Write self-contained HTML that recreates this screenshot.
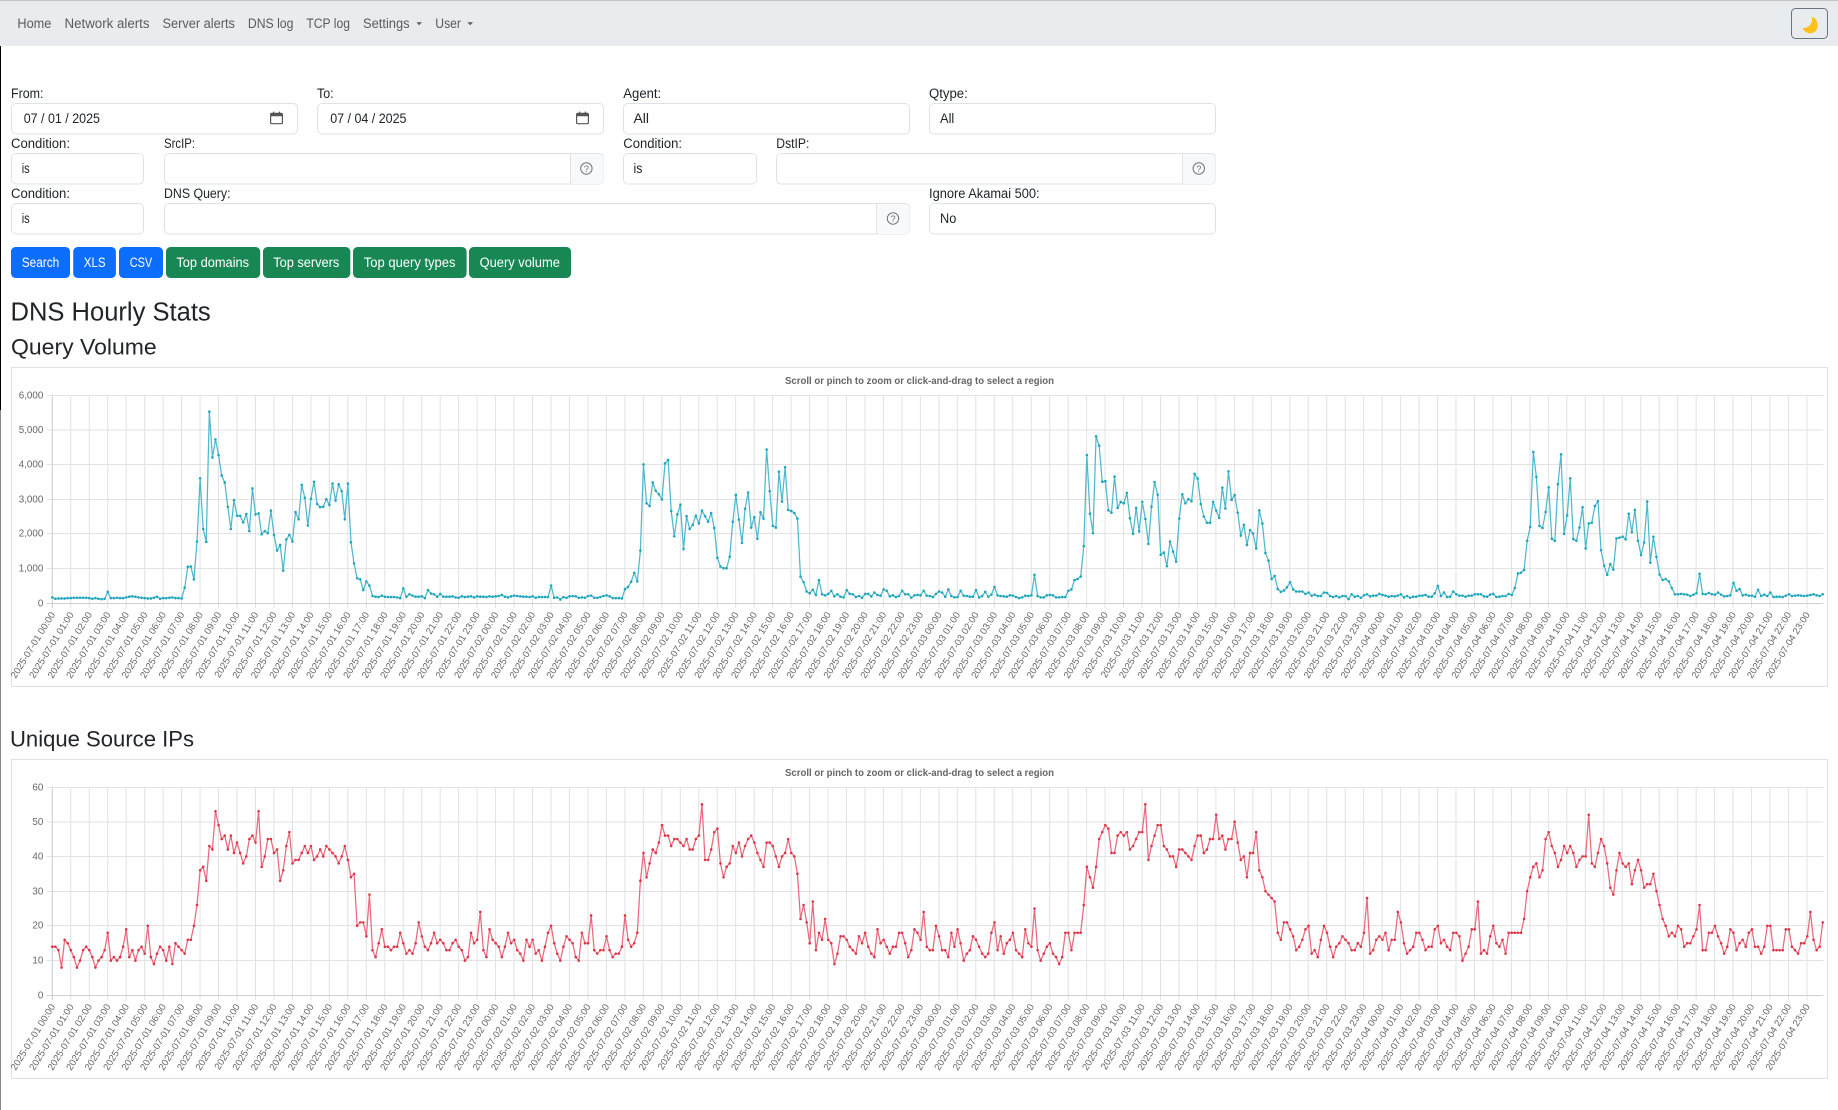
<!DOCTYPE html>
<html lang="en">
<head>
<meta charset="utf-8">
<title>DNS Hourly Stats</title>
<style>
html,body{margin:0;padding:0;background:#fff;width:1838px;height:1110px;overflow:hidden}
svg{display:block;font-family:"Liberation Sans",Arial,sans-serif}
.nav{font-size:13.4px;fill:#595c5f}
.lbl{font-size:13.4px;fill:#212529}
.val{font-size:13.4px;fill:#212529}
.btn{font-size:13.4px;fill:#fff}
.box{fill:#fff;stroke:#dee2e6;stroke-width:1}
.add{fill:#f8f9fa}
.q{font-size:9.5px;fill:#6c757d;text-anchor:middle}
.qc{fill:none;stroke:#6c757d;stroke-width:1}
.h{fill:#212529}
.soft{filter:blur(.3px)}
.ct{font-size:10px;font-weight:bold;fill:#666;text-anchor:middle}
.yl{font-size:9.8px;fill:#666;text-anchor:end}
.xl text{font-size:9.6px;fill:#666;text-anchor:end}
.grid{stroke:#e2e2e2;stroke-width:1;fill:none}
.axis{stroke:#d0d0d0;stroke-width:1;fill:none}
.frame{fill:#fff;stroke:#e0e1e6;stroke-width:1}
.l1{fill:none;stroke:#4fb9cc;stroke-width:1.25;vector-effect:non-scaling-stroke;stroke-linejoin:round;marker:url(#m1)}
.l2{fill:none;stroke:#e9697d;stroke-width:1.25;vector-effect:non-scaling-stroke;stroke-linejoin:round;marker:url(#m2)}
</style>
</head>
<body>
<svg xmlns="http://www.w3.org/2000/svg" width="1838" height="1110" viewBox="0 0 1838 1110">
<defs>
<marker id="m1" markerUnits="userSpaceOnUse" markerWidth="1" markerHeight="1" refX="0" refY="0" overflow="visible"><ellipse cx="0" cy="0" rx=".42" ry="3.74" fill="#1fa6bc"/></marker>
<marker id="m2" markerUnits="userSpaceOnUse" markerWidth="1" markerHeight="1" refX="0" refY="0" overflow="visible"><ellipse cx="0" cy="0" rx=".42" ry=".374" fill="#dc3545"/></marker>
</defs>

<!-- left strip and navbar -->
<rect x="0" y="0" width="1838" height="46" fill="#e9ecef"/>
<rect x="0" y="0" width="1838" height="1" fill="#c6c6c6"/>
<rect x="0" y="46" width="1" height="364" fill="#000"/>
<rect x="0" y="410" width="1" height="700" fill="#888"/>
<text class="nav" x="17.4" y="28" textLength="34" lengthAdjust="spacingAndGlyphs">Home</text>
<text class="nav" x="64.5" y="28" textLength="85" lengthAdjust="spacingAndGlyphs">Network alerts</text>
<text class="nav" x="162.5" y="28" textLength="72.4" lengthAdjust="spacingAndGlyphs">Server alerts</text>
<text class="nav" x="247.9" y="28" textLength="45.5" lengthAdjust="spacingAndGlyphs">DNS log</text>
<text class="nav" x="306.4" y="28" textLength="43.6" lengthAdjust="spacingAndGlyphs">TCP log</text>
<text class="nav" x="363" y="28" textLength="46.6" lengthAdjust="spacingAndGlyphs">Settings</text>
<path d="M416.4 22.3h5.6l-2.8 3z" fill="#595c5f"/>
<text class="nav" x="435.3" y="28" textLength="25.7" lengthAdjust="spacingAndGlyphs">User</text>
<path d="M467.4 22.3h5.6l-2.8 3z" fill="#595c5f"/>
<rect x="1791.5" y="8.5" width="36" height="30" rx="4" fill="none" stroke="#6c757d"/>
<path d="M1811.7 16.7A7.2 7.2 0 0 1 1817.3 23.5A7.2 7.2 0 0 1 1802.7 28A8.7 8.7 0 0 0 1811.7 16.7z" fill="#fcc21b"/>

<!-- row 1 -->
<text class="lbl" x="11" y="98" textLength="32.5" lengthAdjust="spacingAndGlyphs">From:</text>
<rect class="box" x="11.5" y="103.5" width="286" height="30.5" rx="4.5"/>
<text class="val" x="23.7" y="123" textLength="76.3" lengthAdjust="spacingAndGlyphs">07 / 01 / 2025</text>
<g fill="none" stroke="#555" stroke-width="1.2"><rect x="270.6" y="113.3" width="11.8" height="10.4" rx="1.2"/></g>
<path d="M270.6 113.3h11.8v3h-11.8zM273 111.6h1.2v2h-1.2zM278.8 111.6h1.2v2h-1.2z" fill="#555"/>

<text class="lbl" x="317" y="98" textLength="16.6" lengthAdjust="spacingAndGlyphs">To:</text>
<rect class="box" x="317.5" y="103.5" width="286" height="30.5" rx="4.5"/>
<text class="val" x="330.2" y="123" textLength="76.3" lengthAdjust="spacingAndGlyphs">07 / 04 / 2025</text>
<g fill="none" stroke="#555" stroke-width="1.2"><rect x="576.6" y="113.3" width="11.8" height="10.4" rx="1.2"/></g>
<path d="M576.6 113.3h11.8v3h-11.8zM579 111.6h1.2v2h-1.2zM584.8 111.6h1.2v2h-1.2z" fill="#555"/>

<text class="lbl" x="623.3" y="98" textLength="37.9" lengthAdjust="spacingAndGlyphs">Agent:</text>
<rect class="box" x="623.5" y="103.5" width="286" height="30.5" rx="4.5"/>
<text class="val" x="633.5" y="123" textLength="15.5" lengthAdjust="spacingAndGlyphs">All</text>

<text class="lbl" x="929" y="98" textLength="38.8" lengthAdjust="spacingAndGlyphs">Qtype:</text>
<rect class="box" x="929.5" y="103.5" width="286" height="30.5" rx="4.5"/>
<text class="val" x="940" y="123" textLength="14.3" lengthAdjust="spacingAndGlyphs">All</text>

<!-- row 2 -->
<text class="lbl" x="11" y="148" textLength="59" lengthAdjust="spacingAndGlyphs">Condition:</text>
<rect class="box" x="11.5" y="153.5" width="132" height="30.5" rx="4.5"/>
<text class="val" x="21.7" y="173" textLength="8" lengthAdjust="spacingAndGlyphs">is</text>

<text class="lbl" x="164" y="148" textLength="31" lengthAdjust="spacingAndGlyphs">SrcIP:</text>
<rect class="box" x="164.5" y="153.5" width="439" height="30.5" rx="4.5"/>
<path class="add" d="M570.6 154h28.5a4.5 4.5 0 0 1 4.5 4.5v21a4.5 4.5 0 0 1-4.5 4.5h-28.5z"/>
<path d="M570.5 153.5V184" stroke="#dee2e6" fill="none"/>
<circle class="qc" cx="586.4" cy="168.5" r="5.7"/>
<text class="q" x="586.4" y="172">?</text>

<text class="lbl" x="623.3" y="148" textLength="58.7" lengthAdjust="spacingAndGlyphs">Condition:</text>
<rect class="box" x="623.5" y="153.5" width="133" height="30.5" rx="4.5"/>
<text class="val" x="633.5" y="173" textLength="8.9" lengthAdjust="spacingAndGlyphs">is</text>

<text class="lbl" x="776.3" y="148" textLength="33.1" lengthAdjust="spacingAndGlyphs">DstIP:</text>
<rect class="box" x="776.5" y="153.5" width="439" height="30.5" rx="4.5"/>
<path class="add" d="M1182.4 154h28.6a4.5 4.5 0 0 1 4.5 4.5v21a4.5 4.5 0 0 1-4.5 4.5h-28.6z"/>
<path d="M1182.5 153.5V184" stroke="#dee2e6" fill="none"/>
<circle class="qc" cx="1198.8" cy="168.5" r="5.7"/>
<text class="q" x="1198.8" y="172">?</text>

<!-- row 3 -->
<text class="lbl" x="11" y="198" textLength="59" lengthAdjust="spacingAndGlyphs">Condition:</text>
<rect class="box" x="11.5" y="203.5" width="132" height="30.5" rx="4.5"/>
<text class="val" x="21.7" y="223" textLength="8" lengthAdjust="spacingAndGlyphs">is</text>

<text class="lbl" x="164" y="198" textLength="66.5" lengthAdjust="spacingAndGlyphs">DNS Query:</text>
<rect class="box" x="164.5" y="203.5" width="745" height="30.5" rx="4.5"/>
<path class="add" d="M876.3 204h28.7a4.5 4.5 0 0 1 4.5 4.5v21a4.5 4.5 0 0 1-4.5 4.5h-28.7z"/>
<path d="M876.5 203.5V234" stroke="#dee2e6" fill="none"/>
<circle class="qc" cx="893" cy="218.5" r="5.7"/>
<text class="q" x="893" y="222">?</text>

<text class="lbl" x="929" y="198" textLength="110.6" lengthAdjust="spacingAndGlyphs">Ignore Akamai 500:</text>
<rect class="box" x="929.5" y="203.5" width="286" height="30.5" rx="4.5"/>
<text class="val" x="940" y="223" textLength="16.3" lengthAdjust="spacingAndGlyphs">No</text>

<!-- buttons -->
<rect x="11" y="247" width="59" height="31" rx="4.5" fill="#0d6efd"/>
<text class="btn" x="21.7" y="267" textLength="37.6" lengthAdjust="spacingAndGlyphs">Search</text>
<rect x="73.2" y="247" width="42.7" height="31" rx="4.5" fill="#0d6efd"/>
<text class="btn" x="83.8" y="267" textLength="21.8" lengthAdjust="spacingAndGlyphs">XLS</text>
<rect x="119" y="247" width="44" height="31" rx="4.5" fill="#0d6efd"/>
<text class="btn" x="129.7" y="267" textLength="22.5" lengthAdjust="spacingAndGlyphs">CSV</text>
<rect x="166" y="247" width="94.2" height="31" rx="4.5" fill="#198754"/>
<text class="btn" x="176.4" y="267" textLength="72.7" lengthAdjust="spacingAndGlyphs">Top domains</text>
<rect x="263" y="247" width="87.3" height="31" rx="4.5" fill="#198754"/>
<text class="btn" x="273.2" y="267" textLength="66.1" lengthAdjust="spacingAndGlyphs">Top servers</text>
<rect x="353" y="247" width="113.6" height="31" rx="4.5" fill="#198754"/>
<text class="btn" x="363.8" y="267" textLength="91.7" lengthAdjust="spacingAndGlyphs">Top query types</text>
<rect x="469" y="247" width="102" height="31" rx="4.5" fill="#198754"/>
<text class="btn" x="479.6" y="267" textLength="80.3" lengthAdjust="spacingAndGlyphs">Query volume</text>

<!-- headings -->
<text class="h" x="10.5" y="320.7" font-size="25.5" textLength="200.2" lengthAdjust="spacingAndGlyphs">DNS Hourly Stats</text>
<text class="h" x="11" y="354.3" font-size="22" textLength="145.7" lengthAdjust="spacingAndGlyphs">Query Volume</text>
<text class="h" x="10" y="746.7" font-size="22" textLength="184" lengthAdjust="spacingAndGlyphs">Unique Source IPs</text>

<!-- chart 1 -->
<rect class="frame" x="11.5" y="367.5" width="1816" height="319"/>
<g class="soft">
<text class="ct" x="919.5" y="384" textLength="269" lengthAdjust="spacingAndGlyphs">Scroll or pinch to zoom or click-and-drag to select a region</text>
<line x1="51.8" x2="1808" y1="501.5" y2="501.5" stroke="#e2e2e2" stroke-width="213" stroke-dasharray="1 17.47"/>
<path class="grid" d="M47 395.5H1823.3M47 430H1823.3M47 464.5H1823.3M47 499.5H1823.3M47 533.5H1823.3M47 568.5H1823.3"/>
<path class="axis" d="M47 603.5H1823.3M52.3 395V608"/>
<text class="yl" x="43.3" y="398.5">6,000</text>
<text class="yl" x="43.3" y="433">5,000</text>
<text class="yl" x="43.3" y="467.5">4,000</text>
<text class="yl" x="43.3" y="502.5">3,000</text>
<text class="yl" x="43.3" y="536.5">2,000</text>
<text class="yl" x="43.3" y="571.5">1,000</text>
<text class="yl" x="43.3" y="606.5">0</text>
<g transform="translate(52.3 603.3) scale(3.079 -.3472)">
<polyline class="l1" points="0,17 1,13 2,14 3,14 4,14 5,15 6,15 7,16 8,16 9,16 10,16 11,16 12,15 13,13 14,15 15,13 16,12 17,13 18,33 19,15 20,15 21,16 22,15 23,15 24,17 25,19 26,20 27,19 28,17 29,16 30,15 31,14 32,14 33,16 34,19 35,13 36,15 37,15 38,16 39,17 40,15 41,15 42,14 43,45 44,105 45,106 46,69 47,178 48,360 49,214 50,177 51,552 52,420 53,472 54,427 55,368 56,348 57,278 58,214 59,297 60,252 61,252 62,233 63,257 64,208 65,331 66,256 67,259 68,199 69,208 70,202 71,267 72,197 73,152 74,168 75,94 76,184 77,197 78,178 79,263 80,242 81,341 82,304 83,224 84,301 85,350 86,286 87,277 88,278 89,300 90,283 91,345 92,296 93,343 94,323 95,242 96,345 97,176 98,115 99,72 100,69 101,38 102,63 103,51 104,21 105,19 106,18 107,22 108,19 109,18 110,18 111,18 112,17 113,15 114,43 115,19 116,26 117,22 118,19 119,19 120,20 121,15 122,38 123,28 124,26 125,19 126,27 127,19 128,19 129,19 130,20 131,17 132,16 133,20 134,18 135,19 136,20 137,17 138,20 139,19 140,19 141,18 142,20 143,19 144,20 145,21 146,24 147,19 148,17 149,20 150,22 151,21 152,20 153,19 154,19 155,18 156,20 157,16 158,18 159,18 160,18 161,18 162,51 163,16 164,17 165,11 166,18 167,16 168,20 169,21 170,20 171,16 172,17 173,16 174,21 175,22 176,16 177,16 178,18 179,21 180,23 181,20 182,15 183,15 184,15 185,14 186,41 187,47 188,62 189,88 190,63 191,152 192,400 193,288 194,280 195,348 196,324 197,314 198,299 199,403 200,413 201,266 202,193 203,256 204,284 205,156 206,251 207,214 208,226 209,252 210,230 211,267 212,251 213,235 214,260 215,217 216,131 217,106 218,101 219,101 220,134 221,235 222,312 223,241 224,174 225,272 226,319 227,218 228,248 229,186 230,262 231,244 232,443 233,323 234,223 235,218 236,379 237,293 238,392 239,269 240,266 241,260 242,244 243,77 244,61 245,34 246,29 247,39 248,24 249,67 250,26 251,23 252,27 253,36 254,20 255,26 256,19 257,17 258,38 259,27 260,26 261,18 262,21 263,16 264,27 265,27 266,20 267,31 268,24 269,22 270,40 271,36 272,20 273,23 274,18 275,21 276,36 277,26 278,26 279,16 280,23 281,24 282,23 283,36 284,22 285,21 286,18 287,27 288,34 289,31 290,19 291,40 292,21 293,17 294,18 295,36 296,22 297,21 298,19 299,19 300,38 301,17 302,21 303,33 304,19 305,25 306,47 307,23 308,21 309,20 310,19 311,23 312,22 313,18 314,15 315,17 316,22 317,21 318,23 319,82 320,21 321,17 322,17 323,23 324,24 325,23 326,17 327,17 328,18 329,18 330,36 331,40 332,67 333,70 334,77 335,165 336,427 337,258 338,202 339,481 340,454 341,350 342,352 343,268 344,261 345,365 346,275 347,292 348,288 349,318 350,245 351,200 352,275 353,207 354,292 355,243 356,171 357,278 358,349 359,313 360,140 361,146 362,107 363,178 364,149 365,120 366,244 367,314 368,288 369,300 370,294 371,373 372,359 373,286 374,250 375,232 376,232 377,292 378,267 379,246 380,333 381,273 382,380 383,298 384,312 385,261 386,195 387,226 388,168 389,211 390,201 391,158 392,268 393,230 394,145 395,123 396,70 397,79 398,41 399,33 400,37 401,46 402,61 403,40 404,34 405,34 406,34 407,27 408,31 409,22 410,25 411,21 412,21 413,31 414,30 415,21 416,18 417,21 418,17 419,21 420,21 421,12 422,26 423,19 424,21 425,16 426,23 427,26 428,20 429,22 430,22 431,27 432,24 433,22 434,19 435,21 436,20 437,22 438,26 439,17 440,21 441,16 442,19 443,19 444,22 445,22 446,24 447,19 448,19 449,29 450,50 451,21 452,31 453,18 454,19 455,34 456,26 457,22 458,22 459,19 460,22 461,22 462,26 463,26 464,26 465,20 466,19 467,25 468,27 469,18 470,19 471,21 472,21 473,27 474,24 475,44 476,86 477,88 478,96 479,180 480,220 481,436 482,364 483,223 484,217 485,263 486,334 487,186 488,180 489,343 490,429 491,200 492,253 493,360 494,185 495,180 496,218 497,277 498,158 499,230 500,232 501,280 502,294 503,153 504,108 505,82 506,113 507,97 508,187 509,189 510,192 511,184 512,258 513,205 514,269 515,180 516,139 517,175 518,293 519,117 520,192 521,134 522,83 523,67 524,70 525,63 526,44 527,26 528,26 529,27 530,26 531,25 532,21 533,25 534,29 535,85 536,27 537,26 538,30 539,26 540,25 541,31 542,25 543,20 544,21 545,23 546,59 547,36 548,41 549,23 550,25 551,22 552,22 553,19 554,39 555,21 556,25 557,21 558,31 559,18 560,19 561,19 562,18 563,22 564,26 565,21 566,22 567,23 568,22 569,21 570,22 571,24 572,26 573,23 574,21 575,26"/>
</g>
<g class="xl" transform="translate(2.2 614.5)">
<text transform="translate(53.3)rotate(-58.4)">2025-07-01 00:00</text>
<text transform="translate(71.8)rotate(-58.4)">2025-07-01 01:00</text>
<text transform="translate(90.2)rotate(-58.4)">2025-07-01 02:00</text>
<text transform="translate(108.7)rotate(-58.4)">2025-07-01 03:00</text>
<text transform="translate(127.2)rotate(-58.4)">2025-07-01 04:00</text>
<text transform="translate(145.7)rotate(-58.4)">2025-07-01 05:00</text>
<text transform="translate(164.1)rotate(-58.4)">2025-07-01 06:00</text>
<text transform="translate(182.6)rotate(-58.4)">2025-07-01 07:00</text>
<text transform="translate(201.1)rotate(-58.4)">2025-07-01 08:00</text>
<text transform="translate(219.5)rotate(-58.4)">2025-07-01 09:00</text>
<text transform="translate(238)rotate(-58.4)">2025-07-01 10:00</text>
<text transform="translate(256.5)rotate(-58.4)">2025-07-01 11:00</text>
<text transform="translate(274.9)rotate(-58.4)">2025-07-01 12:00</text>
<text transform="translate(293.4)rotate(-58.4)">2025-07-01 13:00</text>
<text transform="translate(311.9)rotate(-58.4)">2025-07-01 14:00</text>
<text transform="translate(330.4)rotate(-58.4)">2025-07-01 15:00</text>
<text transform="translate(348.8)rotate(-58.4)">2025-07-01 16:00</text>
<text transform="translate(367.3)rotate(-58.4)">2025-07-01 17:00</text>
<text transform="translate(385.8)rotate(-58.4)">2025-07-01 18:00</text>
<text transform="translate(404.2)rotate(-58.4)">2025-07-01 19:00</text>
<text transform="translate(422.7)rotate(-58.4)">2025-07-01 20:00</text>
<text transform="translate(441.2)rotate(-58.4)">2025-07-01 21:00</text>
<text transform="translate(459.6)rotate(-58.4)">2025-07-01 22:00</text>
<text transform="translate(478.1)rotate(-58.4)">2025-07-01 23:00</text>
<text transform="translate(496.6)rotate(-58.4)">2025-07-02 00:00</text>
<text transform="translate(515.1)rotate(-58.4)">2025-07-02 01:00</text>
<text transform="translate(533.5)rotate(-58.4)">2025-07-02 02:00</text>
<text transform="translate(552)rotate(-58.4)">2025-07-02 03:00</text>
<text transform="translate(570.5)rotate(-58.4)">2025-07-02 04:00</text>
<text transform="translate(588.9)rotate(-58.4)">2025-07-02 05:00</text>
<text transform="translate(607.4)rotate(-58.4)">2025-07-02 06:00</text>
<text transform="translate(625.9)rotate(-58.4)">2025-07-02 07:00</text>
<text transform="translate(644.3)rotate(-58.4)">2025-07-02 08:00</text>
<text transform="translate(662.8)rotate(-58.4)">2025-07-02 09:00</text>
<text transform="translate(681.3)rotate(-58.4)">2025-07-02 10:00</text>
<text transform="translate(699.8)rotate(-58.4)">2025-07-02 11:00</text>
<text transform="translate(718.2)rotate(-58.4)">2025-07-02 12:00</text>
<text transform="translate(736.7)rotate(-58.4)">2025-07-02 13:00</text>
<text transform="translate(755.2)rotate(-58.4)">2025-07-02 14:00</text>
<text transform="translate(773.6)rotate(-58.4)">2025-07-02 15:00</text>
<text transform="translate(792.1)rotate(-58.4)">2025-07-02 16:00</text>
<text transform="translate(810.6)rotate(-58.4)">2025-07-02 17:00</text>
<text transform="translate(829)rotate(-58.4)">2025-07-02 18:00</text>
<text transform="translate(847.5)rotate(-58.4)">2025-07-02 19:00</text>
<text transform="translate(866)rotate(-58.4)">2025-07-02 20:00</text>
<text transform="translate(884.5)rotate(-58.4)">2025-07-02 21:00</text>
<text transform="translate(902.9)rotate(-58.4)">2025-07-02 22:00</text>
<text transform="translate(921.4)rotate(-58.4)">2025-07-02 23:00</text>
<text transform="translate(939.9)rotate(-58.4)">2025-07-03 00:00</text>
<text transform="translate(958.3)rotate(-58.4)">2025-07-03 01:00</text>
<text transform="translate(976.8)rotate(-58.4)">2025-07-03 02:00</text>
<text transform="translate(995.3)rotate(-58.4)">2025-07-03 03:00</text>
<text transform="translate(1013.7)rotate(-58.4)">2025-07-03 04:00</text>
<text transform="translate(1032.2)rotate(-58.4)">2025-07-03 05:00</text>
<text transform="translate(1050.7)rotate(-58.4)">2025-07-03 06:00</text>
<text transform="translate(1069.2)rotate(-58.4)">2025-07-03 07:00</text>
<text transform="translate(1087.6)rotate(-58.4)">2025-07-03 08:00</text>
<text transform="translate(1106.1)rotate(-58.4)">2025-07-03 09:00</text>
<text transform="translate(1124.6)rotate(-58.4)">2025-07-03 10:00</text>
<text transform="translate(1143)rotate(-58.4)">2025-07-03 11:00</text>
<text transform="translate(1161.5)rotate(-58.4)">2025-07-03 12:00</text>
<text transform="translate(1180)rotate(-58.4)">2025-07-03 13:00</text>
<text transform="translate(1198.4)rotate(-58.4)">2025-07-03 14:00</text>
<text transform="translate(1216.9)rotate(-58.4)">2025-07-03 15:00</text>
<text transform="translate(1235.4)rotate(-58.4)">2025-07-03 16:00</text>
<text transform="translate(1253.9)rotate(-58.4)">2025-07-03 17:00</text>
<text transform="translate(1272.3)rotate(-58.4)">2025-07-03 18:00</text>
<text transform="translate(1290.8)rotate(-58.4)">2025-07-03 19:00</text>
<text transform="translate(1309.3)rotate(-58.4)">2025-07-03 20:00</text>
<text transform="translate(1327.7)rotate(-58.4)">2025-07-03 21:00</text>
<text transform="translate(1346.2)rotate(-58.4)">2025-07-03 22:00</text>
<text transform="translate(1364.7)rotate(-58.4)">2025-07-03 23:00</text>
<text transform="translate(1383.1)rotate(-58.4)">2025-07-04 00:00</text>
<text transform="translate(1401.6)rotate(-58.4)">2025-07-04 01:00</text>
<text transform="translate(1420.1)rotate(-58.4)">2025-07-04 02:00</text>
<text transform="translate(1438.6)rotate(-58.4)">2025-07-04 03:00</text>
<text transform="translate(1457)rotate(-58.4)">2025-07-04 04:00</text>
<text transform="translate(1475.5)rotate(-58.4)">2025-07-04 05:00</text>
<text transform="translate(1494)rotate(-58.4)">2025-07-04 06:00</text>
<text transform="translate(1512.4)rotate(-58.4)">2025-07-04 07:00</text>
<text transform="translate(1530.9)rotate(-58.4)">2025-07-04 08:00</text>
<text transform="translate(1549.4)rotate(-58.4)">2025-07-04 09:00</text>
<text transform="translate(1567.8)rotate(-58.4)">2025-07-04 10:00</text>
<text transform="translate(1586.3)rotate(-58.4)">2025-07-04 11:00</text>
<text transform="translate(1604.8)rotate(-58.4)">2025-07-04 12:00</text>
<text transform="translate(1623.3)rotate(-58.4)">2025-07-04 13:00</text>
<text transform="translate(1641.7)rotate(-58.4)">2025-07-04 14:00</text>
<text transform="translate(1660.2)rotate(-58.4)">2025-07-04 15:00</text>
<text transform="translate(1678.7)rotate(-58.4)">2025-07-04 16:00</text>
<text transform="translate(1697.1)rotate(-58.4)">2025-07-04 17:00</text>
<text transform="translate(1715.6)rotate(-58.4)">2025-07-04 18:00</text>
<text transform="translate(1734.1)rotate(-58.4)">2025-07-04 19:00</text>
<text transform="translate(1752.5)rotate(-58.4)">2025-07-04 20:00</text>
<text transform="translate(1771)rotate(-58.4)">2025-07-04 21:00</text>
<text transform="translate(1789.5)rotate(-58.4)">2025-07-04 22:00</text>
<text transform="translate(1808)rotate(-58.4)">2025-07-04 23:00</text>
</g>
</g>

<!-- chart 2 -->
<rect class="frame" x="11.5" y="759.5" width="1816" height="319"/>
<g class="soft">
<text class="ct" x="919.5" y="776" textLength="269" lengthAdjust="spacingAndGlyphs">Scroll or pinch to zoom or click-and-drag to select a region</text>
<line x1="51.8" x2="1808" y1="893.5" y2="893.5" stroke="#e2e2e2" stroke-width="213" stroke-dasharray="1 17.47"/>
<path class="grid" d="M47 787.5H1823.3M47 822H1823.3M47 856.5H1823.3M47 891.5H1823.3M47 925.5H1823.3M47 960.5H1823.3"/>
<path class="axis" d="M47 995.5H1823.3M52.3 787V1000"/>
<text class="yl" x="43.3" y="790.5">60</text>
<text class="yl" x="43.3" y="825">50</text>
<text class="yl" x="43.3" y="859.5">40</text>
<text class="yl" x="43.3" y="894.5">30</text>
<text class="yl" x="43.3" y="928.5">20</text>
<text class="yl" x="43.3" y="963.5">10</text>
<text class="yl" x="43.3" y="998.5">0</text>
<g transform="translate(52.3 995.3) scale(3.079 -3.472)">
<polyline class="l2" points="0,14 1,14 2,13 3,8 4,16 5,15 6,13 7,11 8,8 9,10 10,13 11,14 12,13 13,11 14,8 15,10 16,11 17,13 18,18 19,10 20,11 21,10 22,11 23,14 24,19 25,11 26,13 27,10 28,13 29,14 30,12 31,20 32,11 33,9 34,12 35,14 36,13 37,10 38,14 39,9 40,15 41,14 42,13 43,12 44,16 45,16 46,20 47,26 48,36 49,37 50,33 51,43 52,42 53,53 54,49 55,45 56,46 57,42 58,46 59,41 60,44 61,41 62,38 63,40 64,45 65,46 66,44 67,53 68,37 69,40 70,45 71,45 72,41 73,42 74,33 75,36 76,43 77,47 78,38 79,39 80,39 81,41 82,43 83,41 84,43 85,39 86,40 87,42 88,40 89,43 90,42 91,41 92,40 93,38 94,40 95,43 96,39 97,34 98,35 99,20 100,21 101,21 102,17 103,29 104,13 105,11 106,15 107,19 108,14 109,14 110,13 111,14 112,14 113,18 114,15 115,12 116,13 117,12 118,15 119,21 120,17 121,14 122,13 123,15 124,18 125,15 126,16 127,15 128,13 129,13 130,15 131,16 132,14 133,13 134,10 135,11 136,18 137,15 138,16 139,24 140,13 141,11 142,19 143,16 144,15 145,14 146,11 147,14 148,18 149,15 150,16 151,13 152,12 153,10 154,16 155,14 156,16 157,12 158,13 159,10 160,14 161,18 162,20 163,15 164,12 165,10 166,14 167,17 168,16 169,15 170,11 171,10 172,18 173,15 174,15 175,23 176,13 177,12 178,13 179,13 180,17 181,13 182,11 183,12 184,12 185,14 186,23 187,16 188,14 189,15 190,18 191,33 192,41 193,34 194,38 195,42 196,41 197,44 198,49 199,46 200,46 201,43 202,45 203,45 204,44 205,43 206,45 207,42 208,42 209,45 210,46 211,55 212,39 213,39 214,42 215,47 216,48 217,38 218,34 219,37 220,38 221,43 222,41 223,44 224,40 225,43 226,45 227,46 228,44 229,41 230,39 231,37 232,44 233,44 234,43 235,40 236,37 237,40 238,41 239,45 240,41 241,40 242,35 243,22 244,26 245,21 246,15 247,27 248,13 249,18 250,16 251,22 252,16 253,15 254,9 255,12 256,17 257,17 258,16 259,14 260,13 261,12 262,17 263,15 264,18 265,14 266,12 267,11 268,19 269,15 270,16 271,14 272,12 273,14 274,14 275,18 276,18 277,15 278,11 279,13 280,19 281,18 282,16 283,24 284,14 285,13 286,13 287,20 288,17 289,13 290,13 291,11 292,18 293,14 294,19 295,15 296,10 297,12 298,13 299,17 300,16 301,14 302,12 303,11 304,12 305,18 306,21 307,13 308,17 309,12 310,15 311,16 312,18 313,13 314,12 315,11 316,19 317,15 318,14 319,25 320,13 321,10 322,12 323,14 324,15 325,12 326,11 327,9 328,11 329,18 330,18 331,13 332,18 333,18 334,18 335,26 336,37 337,34 338,31 339,37 340,45 341,47 342,49 343,48 344,41 345,41 346,46 347,47 348,46 349,47 350,42 351,43 352,45 353,47 354,47 355,55 356,39 357,43 358,46 359,49 360,49 361,43 362,42 363,40 364,40 365,37 366,42 367,42 368,41 369,40 370,39 371,43 372,46 373,46 374,41 375,42 376,45 377,45 378,52 379,45 380,46 381,42 382,45 383,45 384,50 385,44 386,39 387,40 388,34 389,41 390,41 391,47 392,36 393,34 394,30 395,29 396,28 397,27 398,18 399,16 400,21 401,21 402,19 403,17 404,13 405,14 406,16 407,19 408,20 409,12 410,13 411,11 412,16 413,20 414,18 415,14 416,11 417,14 418,15 419,17 420,16 421,15 422,13 423,13 424,15 425,14 426,18 427,28 428,12 429,13 430,16 431,17 432,16 433,18 434,13 435,16 436,16 437,24 438,21 439,15 440,12 441,13 442,14 443,18 444,18 445,16 446,13 447,14 448,14 449,19 450,20 451,15 452,16 453,14 454,13 455,18 456,18 457,17 458,10 459,12 460,14 461,19 462,19 463,27 464,12 465,13 466,12 467,17 468,20 469,15 470,14 471,16 472,12 473,18 474,18 475,18 476,18 477,18 478,22 479,30 480,34 481,37 482,38 483,34 484,36 485,45 486,47 487,43 488,41 489,37 490,39 491,43 492,41 493,43 494,41 495,37 496,39 497,40 498,40 499,52 500,38 501,37 502,41 503,45 504,43 505,38 506,31 507,29 508,36 509,41 510,38 511,37 512,38 513,32 514,36 515,39 516,36 517,31 518,32 519,32 520,35 521,30 522,26 523,22 524,20 525,17 526,18 527,17 528,20 529,19 530,14 531,15 532,15 533,17 534,19 535,26 536,13 537,13 538,18 539,18 540,20 541,17 542,15 543,12 544,14 545,19 546,18 547,13 548,15 549,16 550,14 551,18 552,19 553,14 554,14 555,12 556,14 557,20 558,20 559,13 560,13 561,13 562,13 563,19 564,19 565,14 566,13 567,12 568,15 569,15 570,17 571,24 572,16 573,13 574,14 575,21"/>
</g>
<g class="xl" transform="translate(2.2 1006.5)">
<text transform="translate(53.3)rotate(-58.4)">2025-07-01 00:00</text>
<text transform="translate(71.8)rotate(-58.4)">2025-07-01 01:00</text>
<text transform="translate(90.2)rotate(-58.4)">2025-07-01 02:00</text>
<text transform="translate(108.7)rotate(-58.4)">2025-07-01 03:00</text>
<text transform="translate(127.2)rotate(-58.4)">2025-07-01 04:00</text>
<text transform="translate(145.7)rotate(-58.4)">2025-07-01 05:00</text>
<text transform="translate(164.1)rotate(-58.4)">2025-07-01 06:00</text>
<text transform="translate(182.6)rotate(-58.4)">2025-07-01 07:00</text>
<text transform="translate(201.1)rotate(-58.4)">2025-07-01 08:00</text>
<text transform="translate(219.5)rotate(-58.4)">2025-07-01 09:00</text>
<text transform="translate(238)rotate(-58.4)">2025-07-01 10:00</text>
<text transform="translate(256.5)rotate(-58.4)">2025-07-01 11:00</text>
<text transform="translate(274.9)rotate(-58.4)">2025-07-01 12:00</text>
<text transform="translate(293.4)rotate(-58.4)">2025-07-01 13:00</text>
<text transform="translate(311.9)rotate(-58.4)">2025-07-01 14:00</text>
<text transform="translate(330.4)rotate(-58.4)">2025-07-01 15:00</text>
<text transform="translate(348.8)rotate(-58.4)">2025-07-01 16:00</text>
<text transform="translate(367.3)rotate(-58.4)">2025-07-01 17:00</text>
<text transform="translate(385.8)rotate(-58.4)">2025-07-01 18:00</text>
<text transform="translate(404.2)rotate(-58.4)">2025-07-01 19:00</text>
<text transform="translate(422.7)rotate(-58.4)">2025-07-01 20:00</text>
<text transform="translate(441.2)rotate(-58.4)">2025-07-01 21:00</text>
<text transform="translate(459.6)rotate(-58.4)">2025-07-01 22:00</text>
<text transform="translate(478.1)rotate(-58.4)">2025-07-01 23:00</text>
<text transform="translate(496.6)rotate(-58.4)">2025-07-02 00:00</text>
<text transform="translate(515.1)rotate(-58.4)">2025-07-02 01:00</text>
<text transform="translate(533.5)rotate(-58.4)">2025-07-02 02:00</text>
<text transform="translate(552)rotate(-58.4)">2025-07-02 03:00</text>
<text transform="translate(570.5)rotate(-58.4)">2025-07-02 04:00</text>
<text transform="translate(588.9)rotate(-58.4)">2025-07-02 05:00</text>
<text transform="translate(607.4)rotate(-58.4)">2025-07-02 06:00</text>
<text transform="translate(625.9)rotate(-58.4)">2025-07-02 07:00</text>
<text transform="translate(644.3)rotate(-58.4)">2025-07-02 08:00</text>
<text transform="translate(662.8)rotate(-58.4)">2025-07-02 09:00</text>
<text transform="translate(681.3)rotate(-58.4)">2025-07-02 10:00</text>
<text transform="translate(699.8)rotate(-58.4)">2025-07-02 11:00</text>
<text transform="translate(718.2)rotate(-58.4)">2025-07-02 12:00</text>
<text transform="translate(736.7)rotate(-58.4)">2025-07-02 13:00</text>
<text transform="translate(755.2)rotate(-58.4)">2025-07-02 14:00</text>
<text transform="translate(773.6)rotate(-58.4)">2025-07-02 15:00</text>
<text transform="translate(792.1)rotate(-58.4)">2025-07-02 16:00</text>
<text transform="translate(810.6)rotate(-58.4)">2025-07-02 17:00</text>
<text transform="translate(829)rotate(-58.4)">2025-07-02 18:00</text>
<text transform="translate(847.5)rotate(-58.4)">2025-07-02 19:00</text>
<text transform="translate(866)rotate(-58.4)">2025-07-02 20:00</text>
<text transform="translate(884.5)rotate(-58.4)">2025-07-02 21:00</text>
<text transform="translate(902.9)rotate(-58.4)">2025-07-02 22:00</text>
<text transform="translate(921.4)rotate(-58.4)">2025-07-02 23:00</text>
<text transform="translate(939.9)rotate(-58.4)">2025-07-03 00:00</text>
<text transform="translate(958.3)rotate(-58.4)">2025-07-03 01:00</text>
<text transform="translate(976.8)rotate(-58.4)">2025-07-03 02:00</text>
<text transform="translate(995.3)rotate(-58.4)">2025-07-03 03:00</text>
<text transform="translate(1013.7)rotate(-58.4)">2025-07-03 04:00</text>
<text transform="translate(1032.2)rotate(-58.4)">2025-07-03 05:00</text>
<text transform="translate(1050.7)rotate(-58.4)">2025-07-03 06:00</text>
<text transform="translate(1069.2)rotate(-58.4)">2025-07-03 07:00</text>
<text transform="translate(1087.6)rotate(-58.4)">2025-07-03 08:00</text>
<text transform="translate(1106.1)rotate(-58.4)">2025-07-03 09:00</text>
<text transform="translate(1124.6)rotate(-58.4)">2025-07-03 10:00</text>
<text transform="translate(1143)rotate(-58.4)">2025-07-03 11:00</text>
<text transform="translate(1161.5)rotate(-58.4)">2025-07-03 12:00</text>
<text transform="translate(1180)rotate(-58.4)">2025-07-03 13:00</text>
<text transform="translate(1198.4)rotate(-58.4)">2025-07-03 14:00</text>
<text transform="translate(1216.9)rotate(-58.4)">2025-07-03 15:00</text>
<text transform="translate(1235.4)rotate(-58.4)">2025-07-03 16:00</text>
<text transform="translate(1253.9)rotate(-58.4)">2025-07-03 17:00</text>
<text transform="translate(1272.3)rotate(-58.4)">2025-07-03 18:00</text>
<text transform="translate(1290.8)rotate(-58.4)">2025-07-03 19:00</text>
<text transform="translate(1309.3)rotate(-58.4)">2025-07-03 20:00</text>
<text transform="translate(1327.7)rotate(-58.4)">2025-07-03 21:00</text>
<text transform="translate(1346.2)rotate(-58.4)">2025-07-03 22:00</text>
<text transform="translate(1364.7)rotate(-58.4)">2025-07-03 23:00</text>
<text transform="translate(1383.1)rotate(-58.4)">2025-07-04 00:00</text>
<text transform="translate(1401.6)rotate(-58.4)">2025-07-04 01:00</text>
<text transform="translate(1420.1)rotate(-58.4)">2025-07-04 02:00</text>
<text transform="translate(1438.6)rotate(-58.4)">2025-07-04 03:00</text>
<text transform="translate(1457)rotate(-58.4)">2025-07-04 04:00</text>
<text transform="translate(1475.5)rotate(-58.4)">2025-07-04 05:00</text>
<text transform="translate(1494)rotate(-58.4)">2025-07-04 06:00</text>
<text transform="translate(1512.4)rotate(-58.4)">2025-07-04 07:00</text>
<text transform="translate(1530.9)rotate(-58.4)">2025-07-04 08:00</text>
<text transform="translate(1549.4)rotate(-58.4)">2025-07-04 09:00</text>
<text transform="translate(1567.8)rotate(-58.4)">2025-07-04 10:00</text>
<text transform="translate(1586.3)rotate(-58.4)">2025-07-04 11:00</text>
<text transform="translate(1604.8)rotate(-58.4)">2025-07-04 12:00</text>
<text transform="translate(1623.3)rotate(-58.4)">2025-07-04 13:00</text>
<text transform="translate(1641.7)rotate(-58.4)">2025-07-04 14:00</text>
<text transform="translate(1660.2)rotate(-58.4)">2025-07-04 15:00</text>
<text transform="translate(1678.7)rotate(-58.4)">2025-07-04 16:00</text>
<text transform="translate(1697.1)rotate(-58.4)">2025-07-04 17:00</text>
<text transform="translate(1715.6)rotate(-58.4)">2025-07-04 18:00</text>
<text transform="translate(1734.1)rotate(-58.4)">2025-07-04 19:00</text>
<text transform="translate(1752.5)rotate(-58.4)">2025-07-04 20:00</text>
<text transform="translate(1771)rotate(-58.4)">2025-07-04 21:00</text>
<text transform="translate(1789.5)rotate(-58.4)">2025-07-04 22:00</text>
<text transform="translate(1808)rotate(-58.4)">2025-07-04 23:00</text>
</g>
</g>
</svg>
</body>
</html>
